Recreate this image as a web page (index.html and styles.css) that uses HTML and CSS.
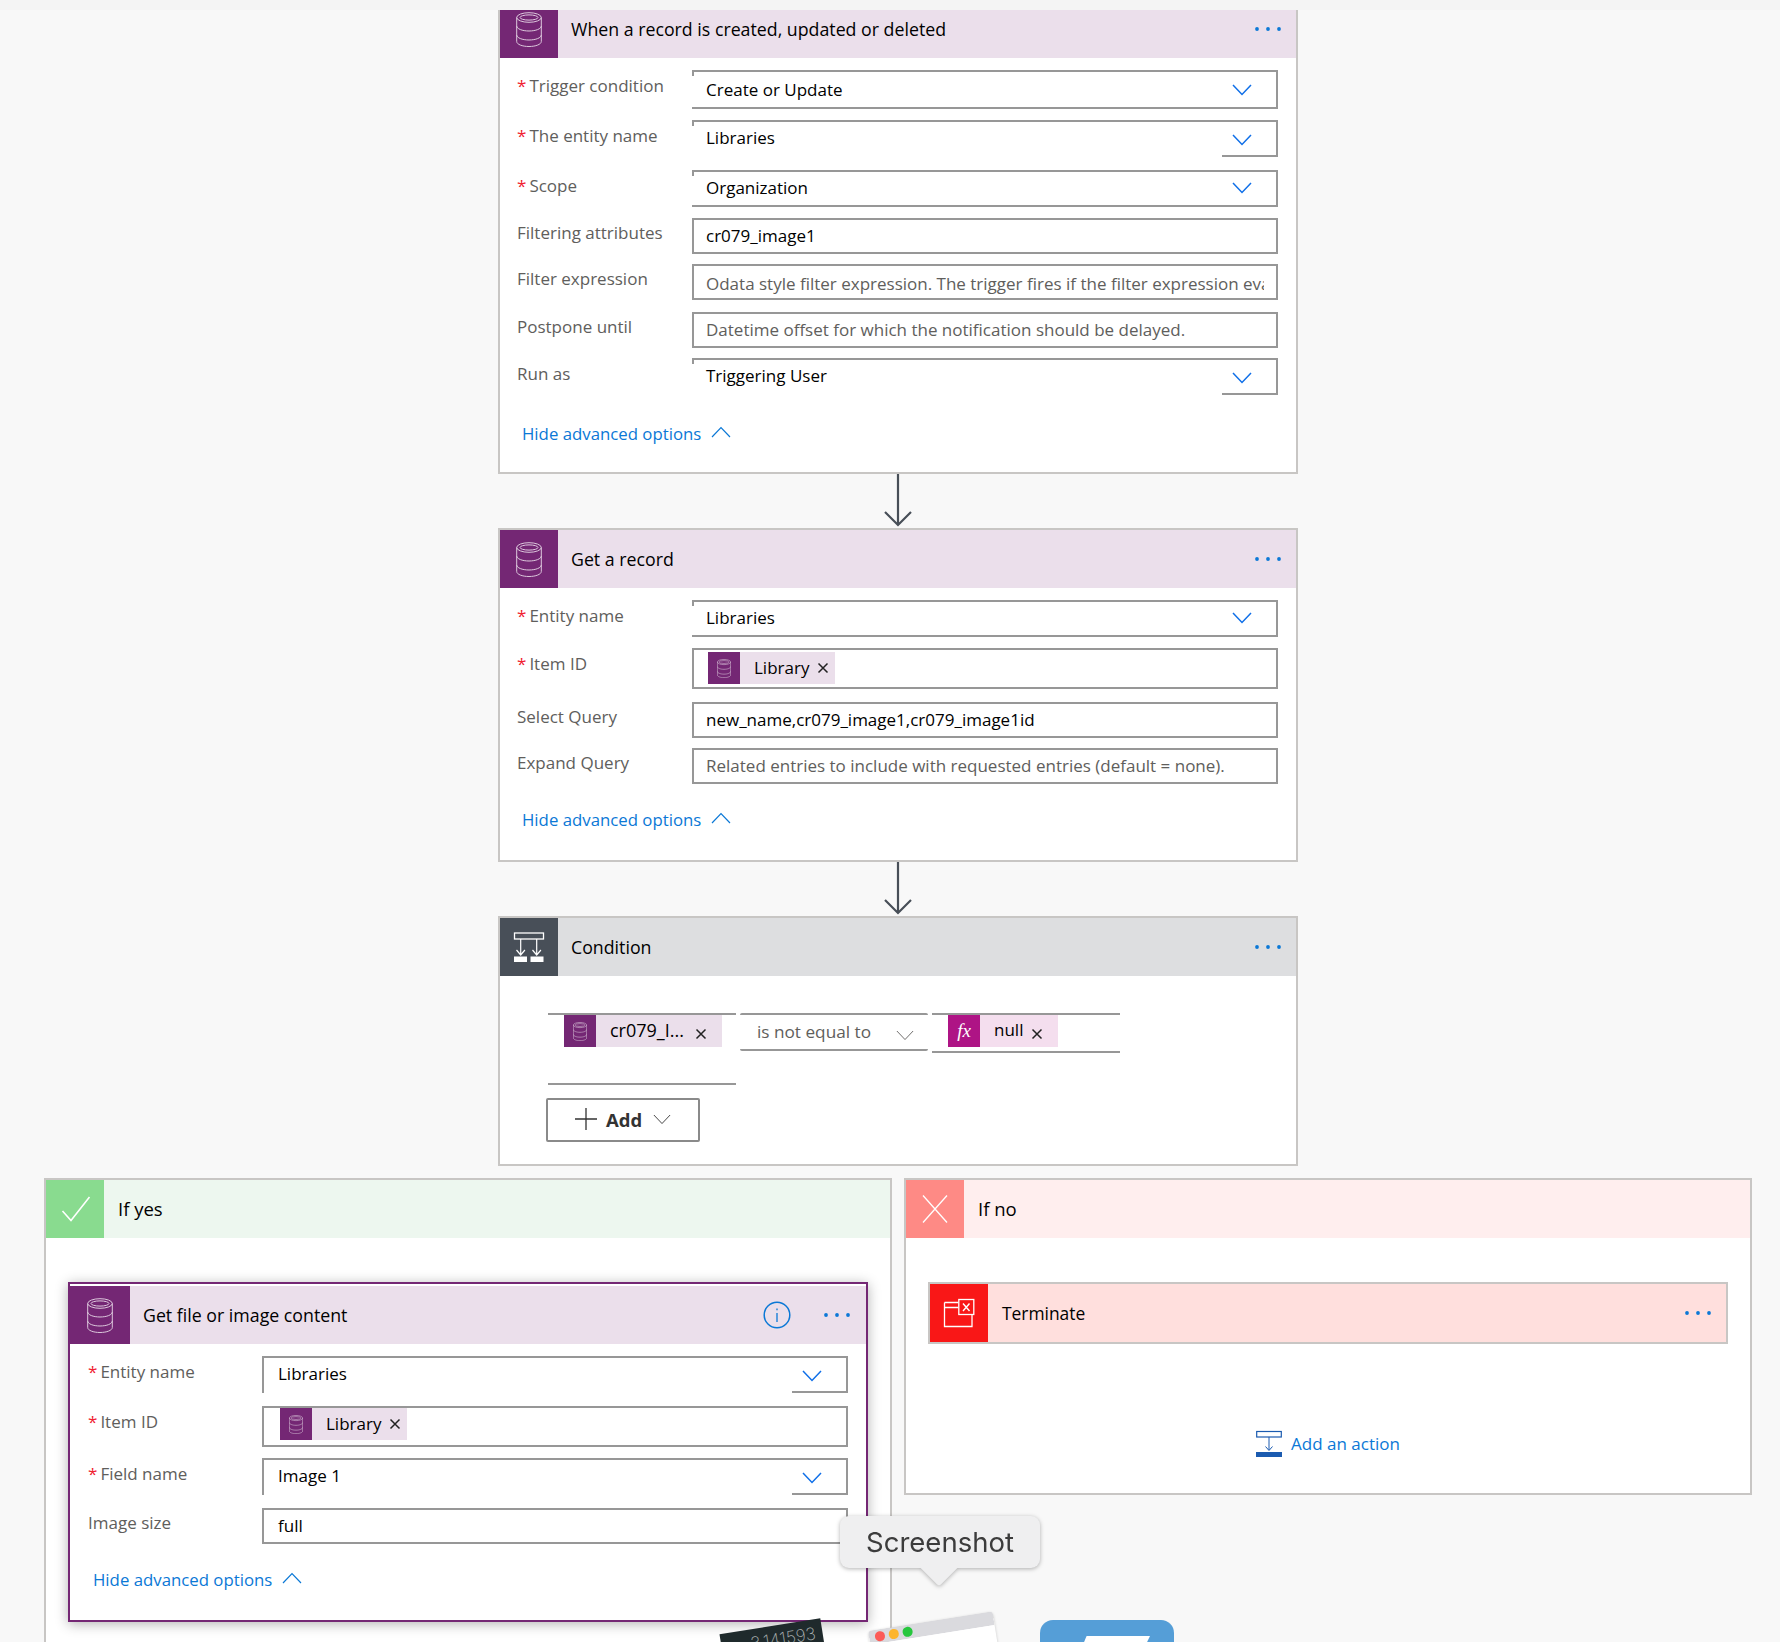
FILE: index.html
```html
<!DOCTYPE html>
<html lang="en">
<head>
<meta charset="utf-8">
<title>Flow designer</title>
<link rel="stylesheet" href="styles.css">
</head>
<body>
<svg class="defs" width="0" height="0" aria-hidden="true">
  <defs>
    <symbol id="db" viewBox="0 0 26 35">
      <g fill="none" stroke="currentColor" stroke-width="1">
        <ellipse cx="13" cy="5.500" rx="12.300" ry="4.800"/>
        <ellipse cx="13" cy="5.500" rx="9" ry="2.600"/>
        <path d="M.7 5.500v24c0 2.800 5.500 5 12.300 5s12.300-2.200 12.300-5v-24"/>
        <path d="M.7 14c0 2.800 5.500 5 12.300 5s12.300-2.200 12.300-5"/>
        <path d="M.7 23c0 2.800 5.500 5 12.300 5s12.300-2.200 12.300-5"/>
      </g>
    </symbol>
    <symbol id="chev" viewBox="0 0 20 12">
      <path d="M1 1l9 9.500L19 1" fill="none" stroke="currentColor" stroke-width="1.500"/>
    </symbol>
    <symbol id="chevthin" viewBox="0 0 20 12">
      <path d="M1 1l9 9.500L19 1" fill="none" stroke="currentColor" stroke-width="1"/>
    </symbol>
    <symbol id="chevup" viewBox="0 0 20 12">
      <path d="M1 11l9-9.500L19 11" fill="none" stroke="currentColor" stroke-width="1.200"/>
    </symbol>
    <symbol id="cross" viewBox="0 0 12 12">
      <path d="M1.500 1.500l9 9M10.500 1.500l-9 9" fill="none" stroke="currentColor" stroke-width="1.500"/>
    </symbol>
    <symbol id="arrow" viewBox="0 0 30 54">
      <path d="M15 0v51M2 38l13 13 13-13" fill="none" stroke="currentColor" stroke-width="2.200"/>
    </symbol>
    <symbol id="more" viewBox="0 0 26 4">
      <circle cx="2" cy="2" r="1.900" fill="currentColor"/>
      <circle cx="13" cy="2" r="1.900" fill="currentColor"/>
      <circle cx="24" cy="2" r="1.900" fill="currentColor"/>
    </symbol>
  </defs>
</svg>

<div class="topstrip"></div>
<main class="canvas">
  <section class="card card-clipped">
    <header class="head head-purple">
      <span class="tile tile-purple"><svg class="db-big"><use href="#db"/></svg></span>
      <h2 class="title">When a record is created, updated or deleted</h2>
      <svg class="dots"><use href="#more"/></svg>
    </header>
    <div class="body">
      <div class="row"><span class="lab req">Trigger condition</span><div class="fld sel tall"><span class="val">Create or Update</span><svg class="chev"><use href="#chev"/></svg></div></div>
      <div class="row"><span class="lab req">The entity name</span><div class="fld sel part"><span class="val">Libraries</span><svg class="chev"><use href="#chev"/></svg></div></div>
      <div class="row gap13"><span class="lab req">Scope</span><div class="fld sel"><span class="val">Organization</span><svg class="chev chev-high"><use href="#chev"/></svg></div></div>
      <div class="row"><span class="lab">Filtering attributes</span><div class="fld box"><span class="val">cr079_image1</span></div></div>
      <div class="row gap10"><span class="lab">Filter expression</span><div class="fld box low"><span class="val ph clip">Odata style filter expression. The trigger fires if the filter expression evaluates to true</span></div></div>
      <div class="row gap12"><span class="lab">Postpone until</span><div class="fld box"><span class="val ph">Datetime offset for which the notification should be delayed.</span></div></div>
      <div class="row gap10"><span class="lab">Run as</span><div class="fld sel part"><span class="val">Triggering User</span><svg class="chev"><use href="#chev"/></svg></div></div>
      <a class="adv adv-a">Hide advanced options<svg class="chevup"><use href="#chevup"/></svg></a>
    </div>
  </section>

  <svg class="conn"><use href="#arrow"/></svg>

  <section class="card">
    <header class="head head-purple">
      <span class="tile tile-purple"><svg class="db-big"><use href="#db"/></svg></span>
      <h2 class="title">Get a record</h2>
      <svg class="dots"><use href="#more"/></svg>
    </header>
    <div class="body">
      <div class="row"><span class="lab req">Entity name</span><div class="fld sel"><span class="val">Libraries</span><svg class="chev chev-high"><use href="#chev"/></svg></div></div>
      <div class="row"><span class="lab req">Item ID</span><div class="fld box chipbox"><span class="chip"><span class="chip-tile"><svg class="db-small"><use href="#db"/></svg></span><span class="chip-text">Library</span><svg class="x"><use href="#cross"/></svg></span></div></div>
      <div class="row gap13"><span class="lab">Select Query</span><div class="fld box"><span class="val">new_name,cr079_image1,cr079_image1id</span></div></div>
      <div class="row gap10"><span class="lab">Expand Query</span><div class="fld box"><span class="val ph">Related entries to include with requested entries (default = none).</span></div></div>
      <a class="adv adv-b">Hide advanced options<svg class="chevup"><use href="#chevup"/></svg></a>
    </div>
  </section>

  <svg class="conn"><use href="#arrow"/></svg>

  <section class="card">
    <header class="head head-gray">
      <span class="tile tile-slate">
        <svg class="cond-ico" viewBox="0 0 58 58">
          <rect x="14.500" y="15" width="29" height="6" fill="none" stroke="#fff" stroke-width="1.300"/>
          <path d="M20.700 21v16M36.700 21v16M16.500 32l4.200 5 4.200-5M32.500 32l4.200 5 4.200-5" fill="none" stroke="#fff" stroke-width="1.200"/>
          <rect x="14" y="38.500" width="13" height="5.500" fill="#fff"/>
          <rect x="30.500" y="38.500" width="13" height="5.500" fill="#fff"/>
        </svg>
      </span>
      <h2 class="title">Condition</h2>
      <svg class="dots"><use href="#more"/></svg>
    </header>
    <div class="cond-body">
      <div class="cond-row">
        <div class="cond-left">
          <span class="chip chip-cond"><span class="chip-tile"><svg class="db-small"><use href="#db"/></svg></span><span class="chip-text">cr079_I...</span><svg class="x x-low"><use href="#cross"/></svg></span>
        </div>
        <div class="cond-sel"><span>is not equal to</span><svg class="chev-gray"><use href="#chevthin"/></svg></div>
        <div class="cond-right">
          <span class="chip chip-fx"><span class="chip-tile fx">fx</span><span class="chip-text">null</span><svg class="x x-low"><use href="#cross"/></svg></span>
        </div>
      </div>
      <button class="add" type="button">
        <svg class="plus" viewBox="0 0 22 22"><path d="M11 0v22M0 11h22" stroke="#333" stroke-width="1.300" fill="none"/></svg>
        <b>Add</b>
        <svg class="add-chev"><use href="#chevthin"/></svg>
      </button>
    </div>
  </section>

  <div class="branches">
    <section class="panel panel-yes">
      <header class="head head-green">
        <span class="tile tile-green"><svg class="mark" viewBox="0 0 30 30"><path d="M1.500 17l8.500 9.500L28.500 3" fill="none" stroke="#fff" stroke-width="1.600"/></svg></span>
        <h2 class="title title-branch">If yes</h2>
      </header>
      <div class="panel-body">
        <section class="card card-active">
          <header class="head head-purple">
            <span class="tile tile-purple tile-active"><svg class="db-big"><use href="#db"/></svg></span>
            <h2 class="title">Get file or image content</h2>
            <svg class="info" viewBox="0 0 28 28"><circle cx="14" cy="14" r="12.800" fill="none" stroke="#0b78d6" stroke-width="1.500"/><path d="M14 12v9M14 7.500v1.800" stroke="#0b78d6" stroke-width="1.300" fill="none"/></svg>
            <svg class="dots"><use href="#more"/></svg>
          </header>
          <div class="body body-active">
            <div class="row"><span class="lab req">Entity name</span><div class="fld sel part full-left"><span class="val">Libraries</span><svg class="chev"><use href="#chev"/></svg></div></div>
            <div class="row gap13"><span class="lab req">Item ID</span><div class="fld box chipbox chipbox-low"><span class="chip"><span class="chip-tile"><svg class="db-small"><use href="#db"/></svg></span><span class="chip-text">Library</span><svg class="x"><use href="#cross"/></svg></span></div></div>
            <div class="row"><span class="lab req">Field name</span><div class="fld sel part full-left"><span class="val">Image 1</span><svg class="chev"><use href="#chev"/></svg></div></div>
            <div class="row gap13"><span class="lab">Image size</span><div class="fld box"><span class="val">full</span></div></div>
            <a class="adv adv-c">Hide advanced options<svg class="chevup"><use href="#chevup"/></svg></a>
          </div>
        </section>
      </div>
    </section>

    <section class="panel panel-no">
      <header class="head head-pink">
        <span class="tile tile-salmon"><svg class="mark mark-x" viewBox="0 0 26 30"><path d="M1 1.500l24 27M25 1.500l-24 27" fill="none" stroke="#fff" stroke-width="1.300"/></svg></span>
        <h2 class="title title-branch">If no</h2>
      </header>
      <div class="panel-body panel-body-no">
        <section class="card card-term">
          <header class="head head-red">
            <span class="tile tile-red">
              <svg class="term-ico" viewBox="0 0 58 58">
                <path d="M14.500 23.500h14M14.500 18.500h14M14.500 18.500v24h27.500v-12" fill="none" stroke="#fff" stroke-width="1.300"/>
                <rect x="28.800" y="15.500" width="15" height="15" fill="#f91717" stroke="#fff" stroke-width="1.300"/>
                <path d="M33 19.500l6.500 7.500M39.500 19.500L33 27" fill="none" stroke="#fff" stroke-width="1.400"/>
              </svg>
            </span>
            <h2 class="title title-term">Terminate</h2>
            <svg class="dots"><use href="#more"/></svg>
          </header>
        </section>
        <a class="add-action">
          <svg class="aa-ico" viewBox="0 0 26 27">
            <rect x=".7" y="1.500" width="24.600" height="5.500" fill="#fff" stroke="#1b5bb0" stroke-width="1.200"/>
            <path d="M13 7v13M9.500 16.500L13 20.500l3.500-4" fill="none" stroke="#1b5bb0" stroke-width="1"/>
            <rect x="0" y="22" width="26" height="5" fill="#1b5bb0"/>
          </svg>
          <span>Add an action</span>
        </a>
      </div>
    </section>
  </div>
</main>

<div class="tooltip">Screenshot</div>
<div class="dock">
  <div class="dock-calc"><span>3.141593</span></div>
  <div class="dock-win"><i class="tl tl-r"></i><i class="tl tl-y"></i><i class="tl tl-g"></i></div>
  <div class="dock-mail"><i class="mail-flap"></i></div>
</div>
</body>
</html>
```
FILE: styles.css
```css
* { box-sizing: border-box; }
html, body { margin: 0; padding: 0; }
body {
  width: 1780px;
  height: 1642px;
  overflow: hidden;
  position: relative;
  background: #f8f8f8;
  font-family: "Open Sans", "Noto Sans", sans-serif;
  font-size: 17px;
  color: #000;
}
.defs { position: absolute; }
h2 { margin: 0; font-weight: 400; }

.topstrip { height: 10px; background: #f4f4f4; }
.canvas { display: flex; flex-direction: column; }

.card {
  width: 800px;
  margin-left: 498px;
  border: 2px solid #c8c6c4;
  background: #fff;
}
.card-clipped { border-top: 0; }

.head {
  display: flex;
  align-items: center;
  height: 58px;
}
.card-clipped .head { height: 48px; }
.head-purple { background: #ebdfeb; }
.head-gray { background: #dddee0; }
.head-green { background: #edf7ef; }
.head-pink { background: #ffeeee; }
.head-red { background: #ffdfdd; }

.tile {
  flex: none;
  width: 58px;
  height: 100%;
  display: flex;
  align-items: center;
  justify-content: center;
  color: #dcc8dc;
}
.card-clipped .tile { align-items: flex-end; padding-bottom: 11px; overflow: hidden; }
.tile-purple { background: #742774; }
.tile-slate { background: #484f58; }
.tile-green { background: #89db8f; }
.tile-salmon { background: #fe8a85; }
.tile-red { background: #f91717; }
.tile-active { width: 60px; }

.db-big { width: 26px; height: 35px; flex: none; }
.db-small { width: 14px; height: 19px; }
.cond-ico, .term-ico { width: 58px; height: 58px; }
.mark { width: 30px; height: 30px; margin-left: 2px; }
.mark-x { width: 26px; height: 30px; margin-left: 0; }

.title {
  flex: 1;
  padding-left: 13px;
  font-size: 17.750px;
  line-height: 24px;
}
.card-clipped .title { margin-top: -11px; }
.title-branch { padding-left: 14px; font-size: 18.500px; }
.title-term { padding-left: 14px; font-size: 17.400px; }

.dots {
  flex: none;
  width: 26px;
  height: 4px;
  margin-right: 15px;
  color: #0b78d6;
}
.card-clipped .dots { margin-top: -10px; }

.body { padding: 12px 18px 0 17px; }
.body-active { padding-left: 18px; }

.row {
  display: grid;
  grid-template-columns: 175px 1fr;
  margin-top: 11px;
}
.body-active .row { grid-template-columns: 174px 1fr; }
.row:first-child { margin-top: 0; }
.row.gap13 { margin-top: 13px; }
.row.gap12 { margin-top: 12px; }
.row.gap10 { margin-top: 10px; }

.lab {
  line-height: 32px;
  font-size: 17px;
  color: #605e5c;
}
.lab:has(+ .box:not(.chipbox)) { line-height: 30px; }
.body-active .lab { line-height: 31px; }
.req::before {
  content: "*";
  color: #f0202f;
  padding-right: 3px;
}

.fld {
  position: relative;
  height: 37px;
  border: 2px solid #979797;
  padding-left: 12px;
  background: #fff;
  min-width: 0;
}
.body-active .fld { padding-left: 14px; }
.sel { border-left: 0; padding-left: 14px; }
.sel::before {
  content: "";
  position: absolute;
  left: 0;
  top: 0;
  width: 2px;
  height: 4px;
  background: #979797;
}
.tall { height: 39px; }
.box { height: 36px; }
.low .val { line-height: 36px; }
.tall .val { line-height: 36px; }

.part { border-bottom: 0; }
.part::after {
  content: "";
  position: absolute;
  right: -2px;
  bottom: 0;
  width: 56px;
  height: 2px;
  background: #979797;
}
.full-left { border-left: 2px solid #979797; }
.full-left::before { display: none; }

.val {
  display: block;
  line-height: 32px;
  font-size: 17px;
  white-space: nowrap;
}
.ph { color: #605e5c; }
.clip { overflow: hidden; margin-right: 12px; }

.chev {
  position: absolute;
  right: 24px;
  top: 12px;
  width: 20px;
  height: 12px;
  color: #0f6fe8;
}
.chev-high { top: 10px; }

.fld.chipbox { height: 41px; padding: 2px 0 0 14px; }
.fld.chipbox-low { padding: 0 0 0 16px; }

.chip {
  display: inline-flex;
  align-items: center;
  height: 32px;
  background: #ebdfeb;
  font-size: 17px;
  vertical-align: top;
}
.chip-tile {
  width: 32px;
  height: 32px;
  flex: none;
  display: flex;
  align-items: center;
  justify-content: center;
  background: #742774;
  color: #dcc8dc;
}
.chip-text { padding-left: 14px; line-height: 32px; }
.x { width: 12px; height: 12px; margin: 0 6px 0 8px; color: #222; flex: none; }
.x-low { margin: 5px 15px 0 0; }

.adv {
  display: flex;
  align-items: center;
  width: max-content;
  margin-left: 5px;
  line-height: 24px;
  font-size: 16.800px;
  color: #0b78d6;
}
.adv-a { margin-top: 27px; padding-bottom: 26px; }
.adv-b { margin-top: 24px; padding-bottom: 28px; }
.adv-c { margin-top: 24px; padding-bottom: 28px; }
.chevup { width: 20px; height: 12px; margin: -5px 0 0 10px; color: #0b78d6; }

.conn {
  display: block;
  flex: none;
  width: 30px;
  height: 54px;
  margin-left: 883px;
  color: #484f58;
}

.cond-body { padding: 37px 0 22px 48px; }
.cond-row { display: flex; align-items: flex-start; }
.cond-left {
  width: 188px;
  height: 72px;
  border-top: 2px solid #979797;
  border-bottom: 2px solid #979797;
  padding-left: 16px;
}
.cond-sel {
  position: relative;
  margin-left: 4px;
  width: 188px;
  height: 38px;
  border-top: 2px solid #979797;
  border-bottom: 2px solid #979797;
  border-radius: 2px;
  padding-left: 17px;
  font-size: 17.200px;
  line-height: 34px;
  color: #605e5c;
  white-space: nowrap;
}
.chev-gray {
  position: absolute;
  right: 14px;
  top: 15px;
  width: 18px;
  height: 11px;
  color: #605e5c;
}
.cond-right {
  margin-left: 4px;
  width: 188px;
  height: 40px;
  border-top: 2px solid #979797;
  border-bottom: 2px solid #979797;
  padding-left: 16px;
}
.chip-cond { width: 158px; }
.chip-cond .chip-text { flex: 1; font-size: 18px; margin-top: -2px; }
.chip-fx { background: #f4deee; width: 110px; }
.chip-fx .chip-text { flex: 1; margin-top: -2px; }
.fx {
  background: #ae1485;
  color: #fff;
  font-family: "Liberation Serif", serif;
  font-style: italic;
  font-size: 19px;
}

.add {
  display: flex;
  align-items: center;
  width: 154px;
  height: 44px;
  margin-top: 13px;
  margin-left: -2px;
  padding: 0 0 2px 27px;
  background: #fff;
  border: 2px solid #8a8a8a;
  border-radius: 2px;
  font-family: inherit;
  font-size: 18.500px;
  color: #333;
}
.plus { width: 22px; height: 22px; flex: none; }
.add b { margin-left: 9px; }
.add-chev { width: 18px; height: 11px; margin-left: 11px; color: #333; }

.branches {
  display: flex;
  align-items: flex-start;
  margin: 12px 0 0 44px;
  gap: 12px;
}
.panel {
  width: 848px;
  border: 2px solid #c8c6c4;
  background: #fff;
}
.panel-yes { height: 520px; }
.panel-body { padding: 44px 0 0 22px; }
.panel-body-no { padding-bottom: 36px; }

.card-active {
  margin: 0;
  border: 2px solid #742774;
  box-shadow: 0 2px 12px rgba(0, 0, 0, .3);
  padding-top: 2px;
}
.info { width: 28px; height: 28px; flex: none; margin-right: 33px; }
.card-active .dots { margin-right: 16px; }

.card-term { margin: 0; }
.card-term .dots { margin-right: 15px; }

.add-action {
  display: flex;
  align-items: center;
  justify-content: center;
  width: 800px;
  margin-top: 86px;
  height: 27px;
  gap: 9px;
  color: #0b78d6;
  font-size: 17px;
}
.aa-ico { width: 26px; height: 27px; flex: none; }

.tooltip {
  position: absolute;
  left: 840px;
  top: 1516px;
  width: 200px;
  height: 52px;
  border-radius: 9px;
  background: #efeff0;
  filter: drop-shadow(0 1px 2px rgba(0, 0, 0, .3));
  color: #3c3c3c;
  font-family: "Inter", sans-serif;
  font-size: 27.500px;
  line-height: 52px;
  text-align: center;
}
.tooltip::after {
  content: "";
  position: absolute;
  left: 86px;
  top: 39px;
  width: 26px;
  height: 26px;
  background: #efeff0;
  transform: rotate(45deg);
  border-bottom-right-radius: 3px;
  z-index: -1;
}

.dock-calc {
  position: absolute;
  left: 722px;
  top: 1626px;
  width: 102px;
  height: 40px;
  background: #1f2a2c;
  transform: rotate(-9deg);
  color: #a8aeae;
  font-family: "Inter", sans-serif;
  font-size: 17px;
  font-weight: 200;
  text-align: right;
  padding: 2px 7px 0 0;
  line-height: 24px;
}
.dock-win {
  position: absolute;
  left: 868px;
  top: 1631px;
  width: 126px;
  height: 60px;
  background: #fff;
  border-top: 14px solid #dadade;
  border-radius: 4px;
  transform-origin: 0 0;
  transform: rotate(-9deg);
  box-shadow: 0 1px 3px rgba(0, 0, 0, .2);
}
.tl {
  position: absolute;
  top: -12px;
  width: 9.500px;
  height: 9.500px;
  border-radius: 50%;
}
.tl-r { left: 6px; background: #fc5b57; }
.tl-y { left: 20px; background: #fdb52d; }
.tl-g { left: 34px; background: #27c73e; }
.dock-mail {
  position: absolute;
  left: 1040px;
  top: 1620px;
  width: 134px;
  height: 60px;
  border-radius: 13px;
  background: #559ed7;
}
.mail-flap {
  position: absolute;
  left: 38px;
  top: 16px;
  width: 72px;
  height: 20px;
  background: #fff;
  clip-path: polygon(12% 0, 100% 0, 96% 30%, 0 100%);
}
```
